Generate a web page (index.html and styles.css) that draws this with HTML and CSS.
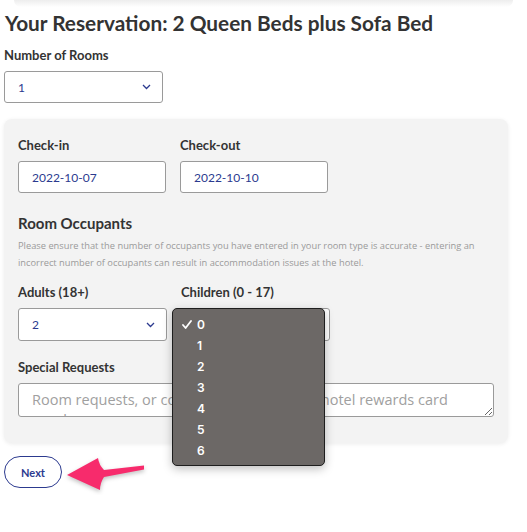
FILE: index.html
```html
<!DOCTYPE html>
<html lang="en">
<head>
<meta charset="utf-8">
<title>Your Reservation</title>
<link rel="stylesheet" href="styles.css">
</head>
<body>
<div class="top-fade"></div>
<main class="page">
  <h1 class="title">Your Reservation: 2 Queen Beds plus Sofa Bed</h1>
  <div class="field">
    <label class="label">Number of Rooms</label>
    <div class="select rooms">
      <span class="value">1</span>
      <svg class="chev" width="9" height="6" viewBox="0 0 9 6"><path d="M1 1l3.5 3.5L8 1" fill="none" stroke="#2c3a8f" stroke-width="1.3"/></svg>
    </div>
  </div>

  <section class="card">
    <div class="row">
      <div class="field">
        <label class="label">Check-in</label>
        <div class="input">2022-10-07</div>
      </div>
      <div class="field">
        <label class="label">Check-out</label>
        <div class="input">2022-10-10</div>
      </div>
    </div>

    <h2 class="subhead">Room Occupants</h2>
    <p class="note">Please ensure that the number of occupants you have entered in your room type is accurate - entering an incorrect number of occupants can result in accommodation issues at the hotel.</p>

    <div class="row occupants">
      <div class="field">
        <label class="label">Adults (18+)</label>
        <div class="select occ">
          <span class="value">2</span>
          <svg class="chev" width="9" height="6" viewBox="0 0 9 6"><path d="M1 1l3.5 3.5L8 1" fill="none" stroke="#2c3a8f" stroke-width="1.3"/></svg>
        </div>
      </div>
      <div class="field children">
        <label class="label">Children (0 - 17)</label>
        <div class="select occ"></div>
        <ul class="popup">
          <li class="opt"><svg class="tick" width="10" height="9" viewBox="0 0 10 9"><path d="M1 5l2.6 3L9 1" fill="none" stroke="#fff" stroke-width="1.8" stroke-linecap="round" stroke-linejoin="round"/></svg>0</li>
          <li class="opt">1</li>
          <li class="opt">2</li>
          <li class="opt">3</li>
          <li class="opt">4</li>
          <li class="opt">5</li>
          <li class="opt">6</li>
        </ul>
      </div>
    </div>

    <div class="field requests">
      <label class="label">Special Requests</label>
      <textarea class="textarea" placeholder="Room requests, or collect points with your hotel rewards card number"></textarea>
    </div>
  </section>

  <div class="actions">
    <button class="next" type="button">Next</button>
    <svg class="arrow" width="84" height="40" viewBox="0 0 84 40">
      <path d="M3 20 L34 3 Q35 10 40 15 L80 10.5 L80 14.5 L40 22 Q36 28 36 35 Z" fill="#f72b6c"/>
    </svg>
  </div>
</main>
</body>
</html>
```

FILE: styles.css
```css
* { box-sizing: border-box; }

body {
  margin: 0;
  background: #fff;
  font-family: "Lato", "Open Sans", sans-serif;
  color: #333;
}

.top-fade {
  height: 7px;
  margin: 0 14px;
  background: linear-gradient(#ededed, #fff);
  border-radius: 0 0 8px 8px;
}

.page {
  padding: 0 4px;
}

.title {
  margin: 4px 0 0 1px;
  font-size: 20.8px;
  line-height: 24px;
  font-weight: 700;
  color: #333;
}

.field {
  display: flex;
  flex-direction: column;
}

.label {
  font-size: 13px;
  line-height: 16px;
  font-weight: 700;
  color: #333;
  margin-top: 12px;
  margin-bottom: 8px;
}

.select {
  display: flex;
  align-items: center;
  justify-content: space-between;
  height: 32px;
  background: #fff;
  border: 1px solid #9a9a9a;
  border-radius: 3px;
  padding: 0 11px 0 13px;
  font-size: 12px;
  color: #2c3a8f;
}

.select.rooms { width: 159px; }
.select.occ { width: 149px; height: 33px; }

.card {
  margin-top: 16px;
  width: 504px;
  background: #f3f3f3;
  border-radius: 8px;
  box-shadow: 0 1px 4px rgba(0,0,0,0.08);
  padding: 6px 14px 26px;
}

.row {
  display: flex;
  gap: 14px;
}

.input {
  width: 148px;
  height: 32px;
  background: #fff;
  border: 1px solid #9a9a9a;
  border-radius: 3px;
  padding: 0 13px;
  display: flex;
  align-items: center;
  font-size: 12px;
  color: #2c3a8f;
}

.subhead {
  margin: 21px 0 0;
  font-size: 15px;
  line-height: 18px;
  font-weight: 700;
  color: #333;
}

.note {
  margin: 6px 0 0;
  font-family: "Open Sans", sans-serif;
  font-size: 9.3px;
  line-height: 16.5px;
  color: #9a9a9a;
}

.occupants .label { margin-top: 13px; }

.children { position: relative; }

.popup {
  position: absolute;
  left: -9px;
  top: 37px;
  width: 153px;
  height: 158px;
  margin: 0;
  padding: 5px 0 0;
  list-style: none;
  background: #6c6866;
  border: 1px solid #1e1e1e;
  border-radius: 5px;
  box-shadow: 0 3px 10px rgba(0,0,0,0.25);
  z-index: 5;
}

.opt {
  height: 21px;
  line-height: 21px;
  padding-left: 24px;
  font-family: "Inter", "Roboto", sans-serif;
  font-size: 12px;
  font-weight: 600;
  color: #fff;
  position: relative;
}

.tick {
  position: absolute;
  left: 9px;
  top: 6px;
}

.requests .label { margin-top: 18px; }

.textarea {
  width: 476px;
  height: 34px;
  border: 1px solid #9a9a9a;
  border-radius: 3px;
  background: #fff;
  padding: 6px 13px 0;
  font-family: "Open Sans", sans-serif;
  font-size: 14.5px;
  line-height: 20px;
  color: #333;
  resize: vertical;
  overflow: hidden;
}

.textarea::placeholder { color: #a0a0a0; }

.actions {
  display: flex;
  align-items: flex-start;
  gap: 2px;
  margin-top: 13px;
}

.next {
  width: 58px;
  height: 32px;
  border: 1.3px solid #2c3a8f;
  border-radius: 16px;
  background: #fff;
  color: #2c3a8f;
  font-family: "Lato", sans-serif;
  font-size: 11px;
  font-weight: 700;
  padding: 0;
}

.arrow {
  filter: drop-shadow(0 2px 2px rgba(0,0,0,0.25));
  margin-top: -1px;
}
```
